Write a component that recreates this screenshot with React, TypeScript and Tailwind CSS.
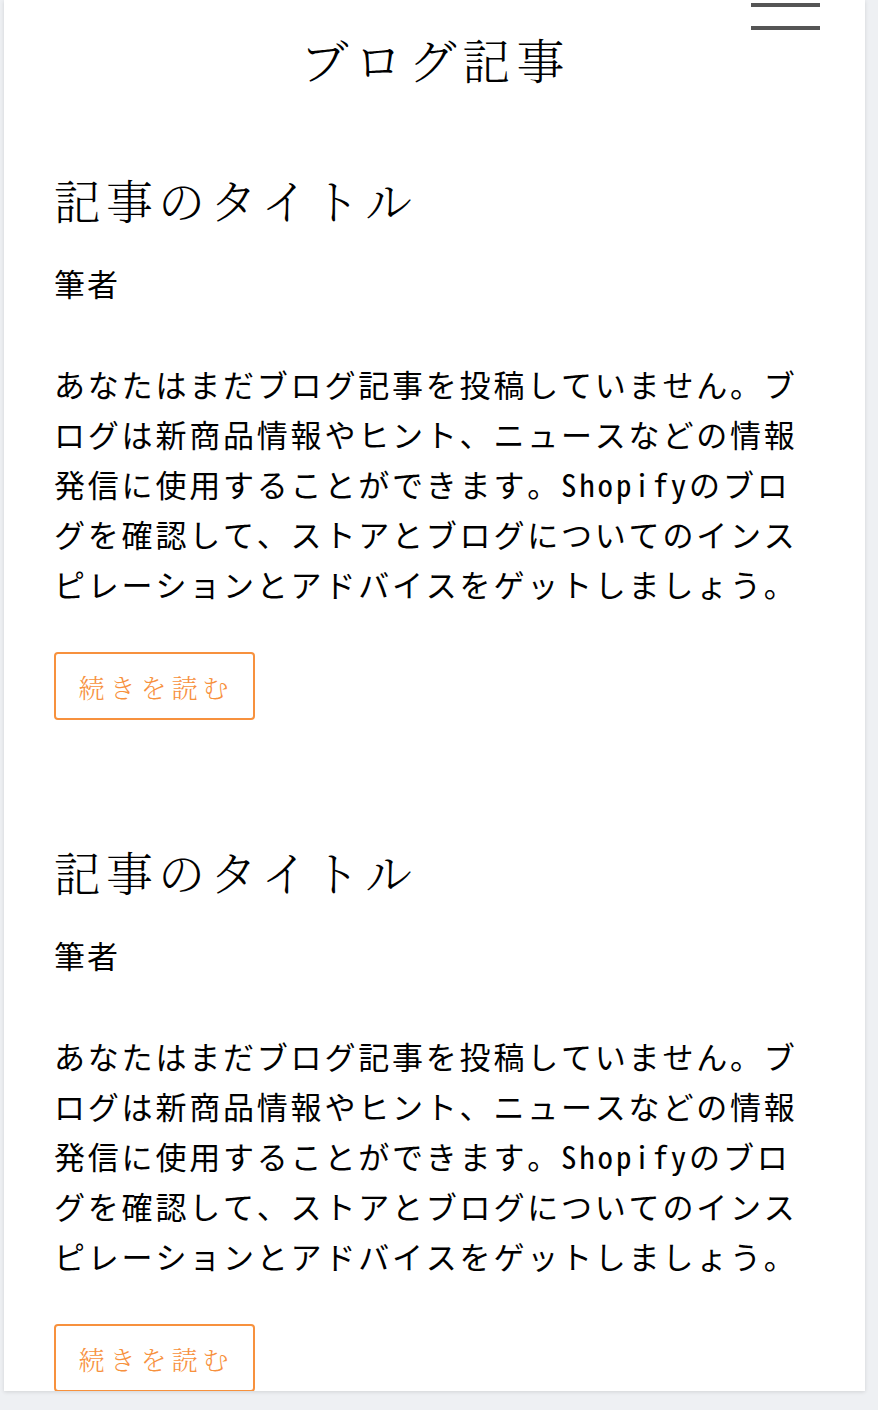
import React from "react";

const serif = `font-['Noto_Serif_CJK_JP','Noto_Serif_JP','Liberation_Serif','Noto_Sans_CJK_JP',serif]`;
const mono = `font-['Noto_Sans_Mono_CJK_JP','Noto_Sans_CJK_JP',monospace]`;

const body =
  "あなたはまだブログ記事を投稿していません。ブログは新商品情報やヒント、ニュースなどの情報発信に使用することができます。Shopifyのブログを確認して、ストアとブログについてのインスピレーションとアドバイスをゲットしましょう。";

function Article({ first }: { first?: boolean }) {
  return (
    <article className={first ? "pt-[94px]" : "pt-[128px]"}>
      <h2
        className={`${serif} text-[47px] leading-[46px] font-light tracking-[5px] text-black`}
      >
        記事のタイトル
      </h2>
      <p className={`${mono} mt-[46px] text-[31px] leading-[30px] tracking-[2px] text-black`}>
        筆者
      </p>
      <p
        className={`${mono} mt-[61px] text-[31px] leading-[50px] tracking-[2.8px] text-black`}
      >
        {body}
      </p>
      <button
        className={`${serif} mt-[43px] flex h-[68px] w-[201px] items-center justify-center rounded-[4px] border-2 border-[#f7913d] pl-[3px] text-[26px] font-light tracking-[5px] text-[#f7913d]`}
      >
        続きを読む
      </button>
    </article>
  );
}

export default function App() {
  return (
    <div className="min-h-[1410px] bg-[#eef0f3]">
      <div className="ml-[4px] h-[1391px] w-[861px] overflow-hidden bg-white px-[50px] shadow-[0_1px_4px_rgba(0,0,0,0.12)]">
        <header className="relative">
          <button className="absolute right-[-5px] top-[3px] flex w-[69px] flex-col gap-[19px]">
            <span className="h-[4px] w-full bg-[#555555]" />
            <span className="h-[4px] w-full bg-[#555555]" />
          </button>
          <h1
            className={`${serif} pt-[36px] pl-[2px] text-center text-[48px] leading-[46px] font-light tracking-[6px] text-black`}
          >
            ブログ記事
          </h1>
        </header>
        <Article first />
        <Article />
      </div>
    </div>
  );
}
